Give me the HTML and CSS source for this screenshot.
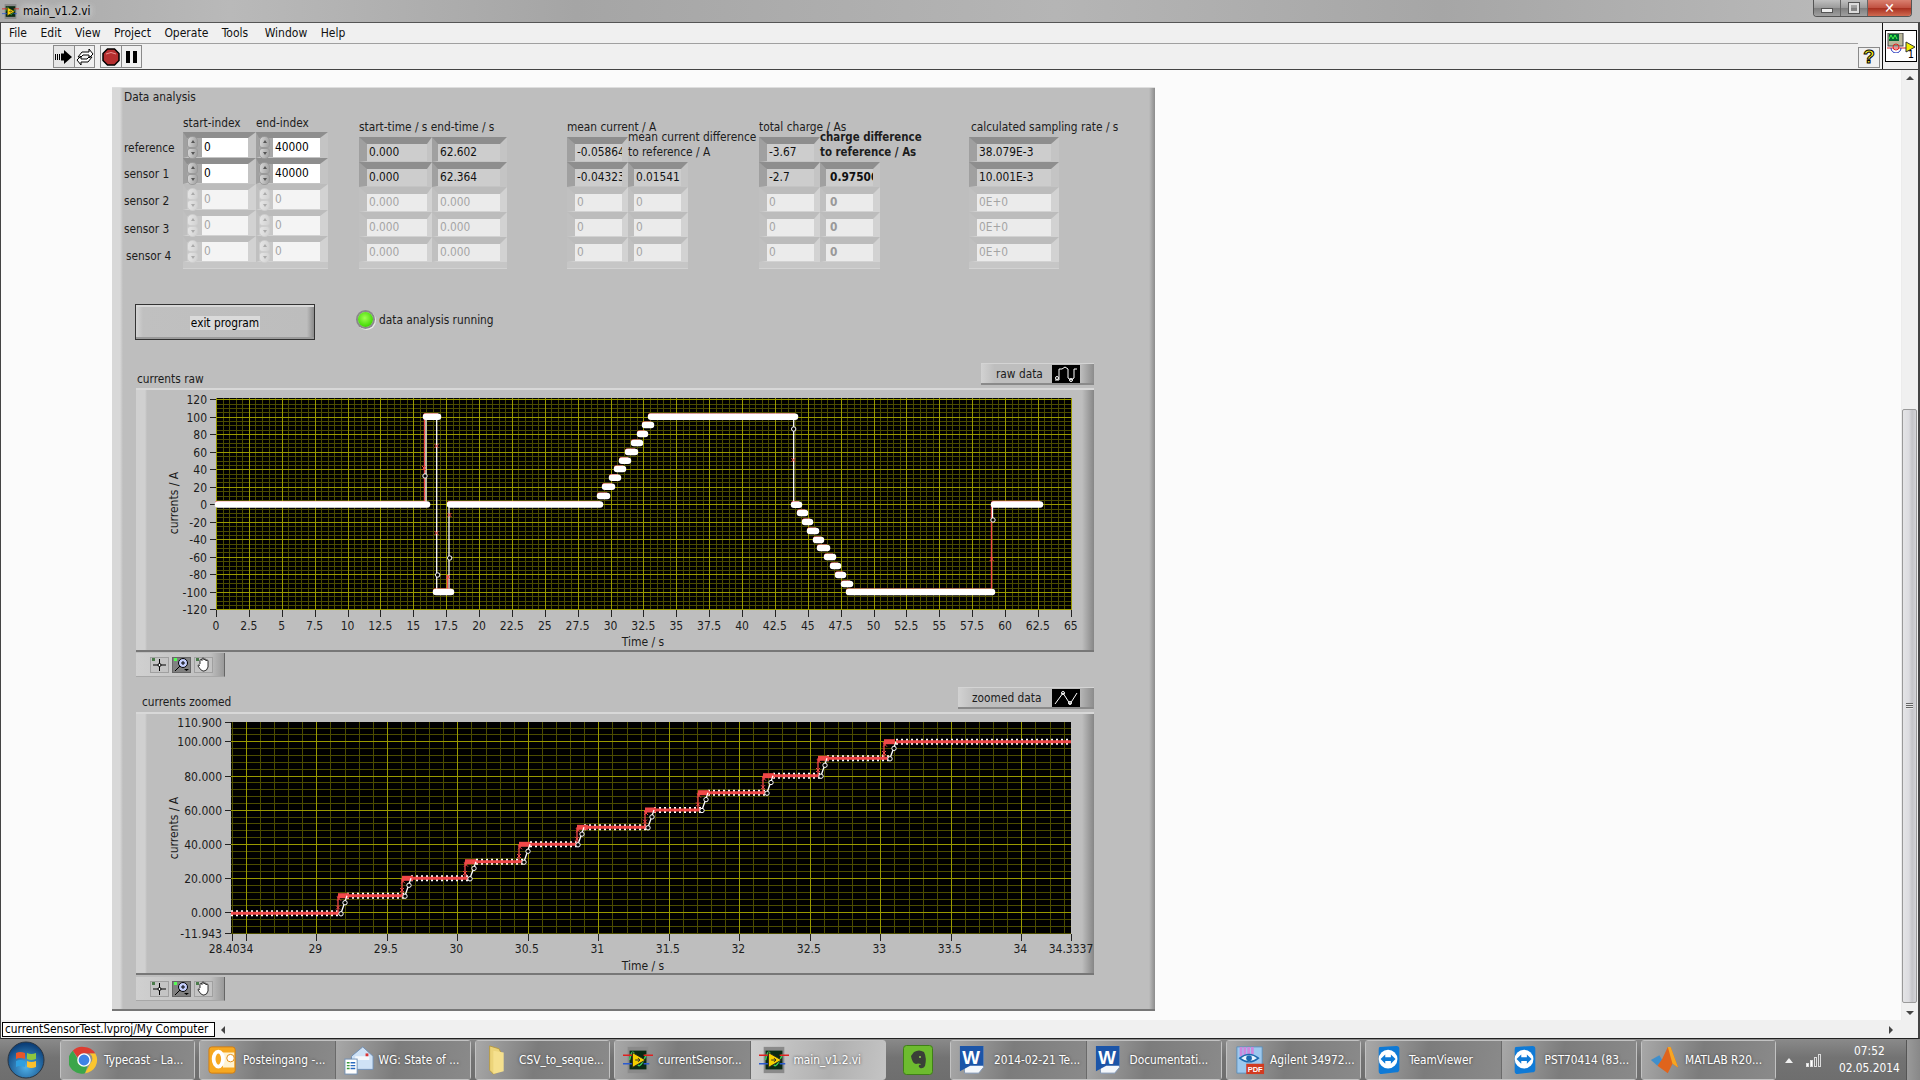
FILE: index.html
```html
<!DOCTYPE html>
<html lang="en">
<head>
    <title>main_v1.2.vi</title>
    <link rel="stylesheet" href="styles.css">
</head>
<body>
    <!-- Shared icons -->
    <svg class="icon-defs" aria-hidden="true">
        <symbol id="i-vi" viewBox="0 0 32 32">
            <rect x="5" y="2" width="22" height="28" fill="#8a8a8a"/>
            <rect x="7" y="6" width="18" height="20" fill="#0a2a12"/>
            <path d="M7 16c3-14 5-8 7 0s4 10 11-6" fill="none" stroke="#3fd05a" stroke-width="1.5"/>
            <path d="M0 11h10M22 11h10" stroke="#e02020" stroke-width="1.5"/>
            <path d="M0 20h10M22 20h6" stroke="#2a5ad0" stroke-width="1.5"/>
            <path d="M10 8l14 8-14 8z" fill="#f5d000" stroke="#222"/>
            <path d="M13 16h5M16 14l2 2-2 2" fill="none" stroke="#222"/>
        </symbol>
        <symbol id="i-word" viewBox="0 0 32 32">
            <path d="M4 2h22v22l-5 6H6z" fill="#f4f7fb" stroke="#7d93b2"/>
            <path d="M1 1h25v21H12L1 28z" fill="#1c55a8"/>
        </symbol>
        <symbol id="i-tv" viewBox="0 0 32 32">
            <path d="M6 2l18-1q3 0 3 3v22q0 3-3 3L8 31q-3 0-3-3V5q0-3 1-3z" fill="#0f7ad6"/>
            <circle cx="15" cy="15" r="10" fill="#fff"/>
            <path d="M7 15l5-5v3h6v-3l5 5-5 5v-3h-6v3z" fill="#0f7ad6"/>
        </symbol>
    </svg>

    <!-- Title bar -->
    <header class="titlebar">
        <svg class="title-icon"><use href="#i-vi"/></svg>
        <span class="title-text">main_v1.2.vi</span>
        <div class="win-buttons">
            <div class="win-btn"><span class="min-glyph"></span></div>
            <div class="win-btn"><span class="max-glyph"></span></div>
            <div class="win-btn win-close">&#10005;</div>
        </div>
    </header>

    <div class="window">
        <div class="bars">
            <div class="bars-left">
                <nav class="menubar">
                    <a href="#">File</a>
                    <a href="#">Edit</a>
                    <a href="#">View</a>
                    <a href="#">Project</a>
                    <a href="#">Operate</a>
                    <a href="#">Tools</a>
                    <a href="#">Window</a>
                    <a href="#">Help</a>
                </nav>
                <div class="toolbar">
                    <div class="tool-group">
                        <div class="tool tool-light">
                            <svg width="18" height="14" viewBox="0 0 18 14"><path d="M0 4h1v6H0zM2 4h1v6H2zM4 4h1v6H4zM6 3.500h3V0l8 7-8 7v-3.500H6z" fill="#000"/></svg>
                        </div>
                        <div class="tool">
                            <svg width="18" height="18" viewBox="0 0 18 18"><path d="M2 9l4-5h7V1l4 5-4 4V7H7L5 9zM16 9l-4 5H5v3l-4-5 4-4v3h6l2-2z" fill="#fff" stroke="#000"/></svg>
                        </div>
                    </div>
                    <div class="tool-group">
                        <div class="tool">
                            <svg width="18" height="18" viewBox="0 0 18 18"><path d="M5.500 1h7L17 5.500v7L12.500 17h-7L1 12.500v-7z" fill="#b52e2e" stroke="#000" stroke-width="1.500"/><path d="M4 6q5-3 10 0" fill="none" stroke="#e89090"/></svg>
                        </div>
                        <div class="tool">
                            <span class="pause-bar"></span><span class="pause-bar"></span>
                        </div>
                    </div>
                </div>
            </div>
            <div class="help-btn">?</div>
            <div class="conn-pane">
                <div class="conn-icon">
                    <svg width="29" height="20" viewBox="0 0 29 20">
                        <rect x="1" y="0" width="15" height="13" fill="#b9b79a" stroke="#444"/>
                        <rect x="2" y="1" width="10" height="7" fill="#063"/>
                        <path d="M2 6l2-4 2 4 2-4 2 4" fill="none" stroke="#4f4" />
                        <path d="M0 15h22" stroke="#d22"/>
                        <path d="M4 15a5 5 0 0 0 10 0" fill="none" stroke="#23b"/>
                        <circle cx="9" cy="14" r="3" fill="none" stroke="#d22"/>
                        <path d="M19 9l9 5-9 5z" fill="#ee0" stroke="#333"/>
                    </svg>
                    <span class="conn-num">1</span>
                </div>
            </div>
        </div>

        <div class="workspace">
            <main class="content">
                <section class="panel">
                    <div class="panel-title">Data analysis</div>

                    <!-- Indicator clusters -->
                    <div class="controls">
                        <div class="row-labels">
                            <span>reference</span>
                            <span>sensor 1</span>
                            <span>sensor 2</span>
                            <span>sensor 3</span>
                            <span class="indent">sensor 4</span>
                        </div>
                        <div class="column">
                            <div class="col-label">start-index</div>
                            <div class="array array-index">
                                <div class="well"><div class="spin"><i></i><i></i></div><div class="cell cell-input">0</div></div>
                                <div class="well"><div class="spin"><i></i><i></i></div><div class="cell cell-input">0</div></div>
                                <div class="well well-off"><div class="spin"><i></i><i></i></div><div class="cell">0</div></div>
                                <div class="well well-off"><div class="spin"><i></i><i></i></div><div class="cell">0</div></div>
                                <div class="well well-off"><div class="spin"><i></i><i></i></div><div class="cell">0</div></div>
                            </div>
                        </div>
                        <div class="column">
                            <div class="col-label">end-index</div>
                            <div class="array array-index array-end">
                                <div class="well"><div class="spin"><i></i><i></i></div><div class="cell cell-input">40000</div></div>
                                <div class="well"><div class="spin"><i></i><i></i></div><div class="cell cell-input">40000</div></div>
                                <div class="well well-off"><div class="spin"><i></i><i></i></div><div class="cell">0</div></div>
                                <div class="well well-off"><div class="spin"><i></i><i></i></div><div class="cell">0</div></div>
                                <div class="well well-off"><div class="spin"><i></i><i></i></div><div class="cell">0</div></div>
                            </div>
                        </div>

                        <div class="column gap-time">
                            <div class="col-label label-time">start-time / s end-time / s</div>
                            <div class="array w-time">
                                <div class="well"><div class="cell">0.000</div></div>
                                <div class="well"><div class="cell">0.000</div></div>
                                <div class="well well-off"><div class="cell">0.000</div></div>
                                <div class="well well-off"><div class="cell">0.000</div></div>
                                <div class="well well-off"><div class="cell">0.000</div></div>
                            </div>
                        </div>
                        <div class="column">
                            <div class="array w-time-end tight">
                                <div class="well"><div class="cell">62.602</div></div>
                                <div class="well"><div class="cell">62.364</div></div>
                                <div class="well well-off"><div class="cell">0.000</div></div>
                                <div class="well well-off"><div class="cell">0.000</div></div>
                                <div class="well well-off"><div class="cell">0.000</div></div>
                            </div>
                        </div>

                        <div class="column gap-mean">
                            <div class="col-label">mean current / A</div>
                            <div class="array w-61">
                                <div class="well"><div class="cell">-0.05864</div></div>
                                <div class="well"><div class="cell">-0.04323</div></div>
                                <div class="well well-off"><div class="cell">0</div></div>
                                <div class="well well-off"><div class="cell">0</div></div>
                                <div class="well well-off"><div class="cell">0</div></div>
                            </div>
                        </div>
                        <div class="column">
                            <div class="col-label label-two">mean current difference<br>to reference / A</div>
                            <div class="array w-60 tight">
                                <div class="well"><div class="cell">0.01541</div></div>
                                <div class="well well-off"><div class="cell">0</div></div>
                                <div class="well well-off"><div class="cell">0</div></div>
                                <div class="well well-off"><div class="cell">0</div></div>
                            </div>
                        </div>

                        <div class="column gap-charge">
                            <div class="col-label">total charge / As</div>
                            <div class="array w-61">
                                <div class="well"><div class="cell">-3.67</div></div>
                                <div class="well"><div class="cell">-2.7</div></div>
                                <div class="well well-off"><div class="cell">0</div></div>
                                <div class="well well-off"><div class="cell">0</div></div>
                                <div class="well well-off"><div class="cell">0</div></div>
                            </div>
                        </div>
                        <div class="column">
                            <div class="col-label label-two label-bold">charge difference<br>to reference / As</div>
                            <div class="array w-60 tight bold-cells">
                                <div class="well"><div class="cell">0.97500</div></div>
                                <div class="well well-off"><div class="cell">0</div></div>
                                <div class="well well-off"><div class="cell">0</div></div>
                                <div class="well well-off"><div class="cell">0</div></div>
                            </div>
                        </div>

                        <div class="column gap-rate">
                            <div class="col-label label-rate">calculated sampling rate / s</div>
                            <div class="array w-rate">
                                <div class="well"><div class="cell">38.079E-3</div></div>
                                <div class="well"><div class="cell">10.001E-3</div></div>
                                <div class="well well-off"><div class="cell">0E+0</div></div>
                                <div class="well well-off"><div class="cell">0E+0</div></div>
                                <div class="well well-off"><div class="cell">0E+0</div></div>
                            </div>
                        </div>
                    </div>

                    <!-- Exit button and status -->
                    <div class="run-row">
                        <button class="exit-btn"><span>exit program</span></button>
                        <span class="led"></span>
                        <span class="led-label">data analysis running</span>
                    </div>

                    <!-- Raw chart -->
                    <div class="chart-block">
                        <div class="chart-head">
                            <div class="chart-label">currents raw</div>
                            <div class="legend">
                                <span>raw data</span>
                                <svg class="legend-icon" width="28" height="18" viewBox="0 0 28 18"><path d="M3 15h4V4h3l3-2 3 2v9l3 2 3-2V4h3" fill="none" stroke="#fff"/><circle cx="5" cy="13" r="1.500" fill="none" stroke="#fff"/><circle cx="19" cy="15" r="1.500" fill="none" stroke="#fff"/></svg>
                            </div>
                        </div>
                        <div class="chart-frame">
                            <svg id="chart-raw" class="chart-svg" width="958" height="264" viewBox="136 388 958 264"></svg>
                        </div>
                        <div class="palette">
                            <div class="pal-btn"><svg width="17" height="15" viewBox="0 0 17 15"><rect x="1" y="1" width="3" height="3" fill="#4a7a4a"/><path d="M8.500 2v12M2 8h13" stroke="#000"/><circle cx="8.500" cy="8" r="1.500" fill="#fff" stroke="#000"/></svg></div>
                            <div class="pal-btn pal-active"><svg width="17" height="15" viewBox="0 0 17 15"><rect x="1" y="1" width="3" height="3" fill="#5f5"/><circle cx="10" cy="6" r="4.500" fill="#c6d0ff" stroke="#000"/><path d="M8 6h4M10 4v4M7 9l-5 5" stroke="#000"/><path d="M11 12h5l-2.500 2z" fill="#000"/></svg></div>
                            <div class="pal-btn"><svg width="17" height="15" viewBox="0 0 17 15"><rect x="1" y="1" width="3" height="3" fill="#4a7a4a"/><path d="M5 7V3.500a1 1 0 0 1 2 0V2a1 1 0 0 1 2 0v1a1 1 0 0 1 2 0v1a1 1 0 0 1 2 0v6q-1 4-4 4H8Q6 14 3 9q0-2 2-.5" fill="#fff" stroke="#000" stroke-width=".8"/></svg></div>
                        </div>
                    </div>

                    <!-- Zoomed chart -->
                    <div class="chart-block chart-block-low">
                        <div class="chart-head">
                            <div class="chart-label label-zoomed">currents zoomed</div>
                            <div class="legend legend-wide">
                                <span>zoomed data</span>
                                <svg class="legend-icon" width="28" height="18" viewBox="0 0 28 18"><path d="M3 15l8-11 7 11 7-11" fill="none" stroke="#fff"/><circle cx="11" cy="4" r="1.500" fill="none" stroke="#fff"/><circle cx="18" cy="14" r="1.500" fill="none" stroke="#fff"/></svg>
                            </div>
                        </div>
                        <div class="chart-frame chart-frame-low">
                            <svg id="chart-zoom" class="chart-svg" width="958" height="263" viewBox="136 712 958 263"></svg>
                        </div>
                        <div class="palette palette-low">
                            <div class="pal-btn"><svg width="17" height="15" viewBox="0 0 17 15"><rect x="1" y="1" width="3" height="3" fill="#4a7a4a"/><path d="M8.500 2v12M2 8h13" stroke="#000"/><circle cx="8.500" cy="8" r="1.500" fill="#fff" stroke="#000"/></svg></div>
                            <div class="pal-btn pal-active"><svg width="17" height="15" viewBox="0 0 17 15"><rect x="1" y="1" width="3" height="3" fill="#5f5"/><circle cx="10" cy="6" r="4.500" fill="#c6d0ff" stroke="#000"/><path d="M8 6h4M10 4v4M7 9l-5 5" stroke="#000"/><path d="M11 12h5l-2.500 2z" fill="#000"/></svg></div>
                            <div class="pal-btn"><svg width="17" height="15" viewBox="0 0 17 15"><rect x="1" y="1" width="3" height="3" fill="#4a7a4a"/><path d="M5 7V3.500a1 1 0 0 1 2 0V2a1 1 0 0 1 2 0v1a1 1 0 0 1 2 0v1a1 1 0 0 1 2 0v6q-1 4-4 4H8Q6 14 3 9q0-2 2-.5" fill="#fff" stroke="#000" stroke-width=".8"/></svg></div>
                        </div>
                    </div>
                </section>
            </main>

            <aside class="vscroll">
                <span class="arrow-up"></span>
                <div class="vthumb"><span class="grip"></span></div>
                <span class="arrow-down"></span>
            </aside>
        </div>

        <div class="hscroll">
            <div class="project-tag">currentSensorTest.lvproj/My Computer</div>
            <span class="arrow-left"></span>
            <span class="arrow-right"></span>
        </div>
    </div>

    <!-- Windows taskbar -->
    <footer class="taskbar">
        <div class="orb">
            <svg width="38" height="38" viewBox="0 0 38 38">
                <defs><radialGradient id="orb-fill" cx="50%" cy="70%" r="65%"><stop offset="0" stop-color="#4fb0e8"/><stop offset="1" stop-color="#0c3f78"/></radialGradient></defs>
                <circle cx="19" cy="19" r="18" fill="url(#orb-fill)" stroke="#2a3440"/>
                <path d="M9 12q4-2 9 0v6q-5-2-9 0z" fill="#e8562a"/>
                <path d="M20 12q4 2 9 0v6q-5 2-9 0z" fill="#8ec63f"/>
                <path d="M9 20q4-2 9 0v6q-5-2-9 0z" fill="#2f9fe0"/>
                <path d="M20 20q4 2 9 0v6q-5 2-9 0z" fill="#fbc02d"/>
            </svg>
        </div>
        <div class="task-group group-one">
            <div class="task">
                <svg class="task-icon" viewBox="0 0 32 32">
                    <path d="M16 2a14 14 0 0 1 12.100 7H16a7 7 0 0 0-6.500 4.500L4 6a14 14 0 0 1 12-4z" fill="#dd3d32"/>
                    <path d="M28.100 9A14 14 0 0 1 17 30l5.500-10a7 7 0 0 0-.5-11z" fill="#fbc62f"/>
                    <path d="M4 6l6 10a7 7 0 0 0 10 5l-3 9A14 14 0 0 1 4 6z" fill="#3ba64a"/>
                    <circle cx="16" cy="16" r="6.500" fill="#3f83e6" stroke="#fff" stroke-width="1.500"/>
                </svg>
                <span>Typecast - La...</span>
            </div>
        </div>
        <div class="task-group">
            <div class="task">
                <svg class="task-icon" viewBox="0 0 32 32">
                    <rect x="1" y="2" width="28" height="28" rx="3" fill="#f6a821" stroke="#d07c10"/>
                    <rect x="16" y="8" width="12" height="16" fill="#fff3d0"/>
                    <ellipse cx="11" cy="15" rx="5" ry="8" fill="none" stroke="#fff" stroke-width="4"/>
                    <circle cx="24" cy="14" r="4" fill="#fff" stroke="#e08a10"/>
                </svg>
                <span>Posteingang -...</span>
            </div>
            <div class="task">
                <svg class="task-icon" viewBox="0 0 32 32">
                    <path d="M8 12L20 2l11 10v14H8z" fill="#cfe2f6" stroke="#6f8fb5"/>
                    <path d="M12 12h15v4H12z" fill="#f4f8fc"/>
                    <rect x="23" y="9" width="3" height="3" fill="#d33"/>
                    <rect x="1" y="15" width="13" height="16" fill="#fff" stroke="#6f8fb5"/>
                    <path d="M3 19h3M3 22h3M3 25h3" stroke="#3a9a3a" stroke-width="1.500"/>
                    <path d="M7 19h5M7 22h5M7 25h5" stroke="#2a6ac0" stroke-width="1.500"/>
                </svg>
                <span>WG: State of ...</span>
            </div>
        </div>
        <div class="task-group group-one">
            <div class="task">
                <svg class="task-icon" viewBox="0 0 32 32">
                    <path d="M6 1l10 3 3 6v17l-9 4-4-4z" fill="#ecd47a" stroke="#b89a40"/>
                    <path d="M10 6l11 2v20l-11 3z" fill="#f5e08e"/>
                </svg>
                <span>CSV_to_seque...</span>
            </div>
        </div>
        <div class="task-group">
            <div class="task">
                <svg class="task-icon"><use href="#i-vi"/></svg>
                <span>currentSensor...</span>
            </div>
            <div class="task task-active">
                <svg class="task-icon"><use href="#i-vi"/></svg>
                <span>main_v1.2.vi</span>
            </div>
        </div>
        <div class="evernote">
            <svg width="30" height="30" viewBox="0 0 30 30">
                <rect x="0.500" y="0.500" width="29" height="29" rx="3" fill="#6dbb2f" stroke="#3f7f18"/>
                <path d="M8 11l3-4q5-3 10 0 3 6 1 14-2 3-5 2-2-1-1-3 2 0 2-1-3-1-5 0-4-1-5-8z" fill="#3a3f38"/>
                <circle cx="17" cy="12" r="1" fill="#8fd050"/>
            </svg>
        </div>
        <div class="task-group">
            <div class="task">
                <svg class="task-icon" viewBox="0 0 32 32"><use href="#i-word"/><text class="word-letter" x="13" y="20">W</text></svg>
                <span>2014-02-21 Te...</span>
            </div>
            <div class="task">
                <svg class="task-icon" viewBox="0 0 32 32"><use href="#i-word"/><text class="word-letter" x="13" y="20">W</text></svg>
                <span>Documentati...</span>
            </div>
        </div>
        <div class="task-group group-one">
            <div class="task">
                <svg class="task-icon" viewBox="0 0 32 32">
                    <path d="M2 2h27v28H2z" fill="#9cc8ee" stroke="#5d8db8"/>
                    <path d="M5 2h3v10H5zM9 2h3v9H9zM13 2h3v8h-3zM17 2h3v8h-3z" fill="#c8d"/>
                    <path d="M5 14q10-8 20 0-10 8-20 0z" fill="#e8f4fc" stroke="#1d69b0" stroke-width="1.500"/>
                    <circle cx="15" cy="14" r="3" fill="#1d69b0"/>
                    <rect class="pdf-tag" x="12" y="20" width="19" height="11"/>
                    <text class="pdf-text" x="21.500" y="28.500">PDF</text>
                </svg>
                <span>Agilent 34972...</span>
            </div>
        </div>
        <div class="task-group">
            <div class="task">
                <svg class="task-icon"><use href="#i-tv"/></svg>
                <span>TeamViewer</span>
            </div>
            <div class="task">
                <svg class="task-icon"><use href="#i-tv"/></svg>
                <span>PST70414 (83...</span>
            </div>
        </div>
        <div class="task-group group-one">
            <div class="task">
                <svg class="task-icon" viewBox="0 0 32 32">
                    <path d="M1 16l9-5 3 5-5 6z" fill="#3f8fcc"/>
                    <path d="M8 22l5-7 6-13 3 0 8 22-6-4-5 10z" fill="#e0641c"/>
                    <path d="M19 2l3 0 8 22-6-4z" fill="#f5a623"/>
                </svg>
                <span>MATLAB R20...</span>
            </div>
        </div>
        <div class="tray">
            <span class="tray-arrow"></span>
            <div class="signal"><i></i><i></i><i></i><i></i></div>
            <div class="clock"><span>07:52</span><span>02.05.2014</span></div>
        </div>
        <div class="show-desktop"></div>
    </footer>

    <script src="charts.js"></script>
</body>
</html>
```

FILE: styles.css
```css
/* Global Styles */
* {
    margin: 0;
    padding: 0;
    box-sizing: border-box;
}

body {
    width: 1920px;
    height: 1080px;
    overflow: hidden;
    display: flex;
    flex-direction: column;
    font-family: "DejaVu Sans Condensed", "Liberation Sans", sans-serif;
    font-stretch: condensed;
    font-size: 11.800px;
    color: #1c1c1c;
    background-color: #fbfbfb;
}

.icon-defs {
    position: absolute;
    width: 0;
    height: 0;
}

/* Title bar */
.titlebar {
    height: 22px;
    display: flex;
    align-items: center;
    padding-left: 2px;
    background: linear-gradient(90deg, #a9a9a9 0, #b9b9b9 12%, #a5a5a5 30%, #b5b5b5 55%, #a6a6a6 75%, #bdbdbd 100%);
}

.title-icon {
    width: 17px;
    height: 17px;
}

.title-text {
    margin-left: 4px;
    font-size: 11.800px;
    color: #000;
    text-shadow: 0 0 8px #f2f2f2, 0 0 8px #f2f2f2;
}

.win-buttons {
    margin-left: auto;
    margin-right: 8px;
    height: 17px;
    align-self: flex-start;
    display: flex;
    border: 1px solid #555;
    border-top: none;
    border-radius: 0 0 4px 4px;
    overflow: hidden;
}

.win-btn {
    width: 27px;
    display: flex;
    align-items: center;
    justify-content: center;
    background: linear-gradient(#c0c0c0, #9a9a9a 50%, #7f7f7f 52%, #a0a0a0);
    border-right: 1px solid #666;
}

.min-glyph {
    width: 12px;
    height: 5px;
    margin-top: 4px;
    background-color: #eee;
    border: 1px solid #555;
}

.max-glyph {
    width: 10px;
    height: 10px;
    background-color: transparent;
    border: 2px solid #dcdcdc;
    outline: 1px solid #555;
}

.win-close {
    width: 43px;
    border-right: none;
    color: #fff;
    font-size: 14px;
    font-weight: bold;
    background: linear-gradient(#d98070, #c05040 50%, #a83020 52%, #d06a50);
}

/* Window chrome */
.window {
    flex: 1;
    min-height: 0;
    display: flex;
    flex-direction: column;
    border-left: 1px solid #444;
    border-right: 2px solid #444;
    border-top: 1px solid #555;
    border-bottom: 1px solid #222;
}

.bars {
    height: 47px;
    display: flex;
    background-color: #f0f0f0;
    border-bottom: 1px solid #444;
}

.bars-left {
    flex: 1;
}

.menubar {
    height: 21px;
    display: flex;
    align-items: center;
    padding-left: 8px;
    gap: 13.500px;
    border-bottom: 1px solid #a0a0a0;
}

.menubar a {
    text-decoration: none;
    color: #111;
    font-size: 12px;
}

.menubar a:nth-child(7) {
    margin-left: 3px;
}

.toolbar {
    height: 25px;
    display: flex;
    align-items: center;
    padding-left: 52px;
    gap: 5px;
}

.tool-group {
    display: flex;
    border: 1px solid #8a8a8a;
}

.tool {
    width: 20px;
    height: 21px;
    display: flex;
    align-items: center;
    justify-content: center;
    gap: 3px;
    background-color: #f0f0f0;
}

.tool + .tool {
    border-left: 1px solid #8a8a8a;
}

.tool-light {
    background-color: #e6e6e6;
}

.pause-bar {
    width: 4px;
    height: 12px;
    background-color: #000;
}

.help-btn {
    align-self: flex-end;
    width: 22px;
    height: 21px;
    margin: 0 2px 1px 0;
    border: 1px solid #8a8a8a;
    text-align: center;
    line-height: 18px;
    font-family: "Liberation Sans", sans-serif;
    font-size: 19px;
    font-weight: bold;
    color: #f5ee20;
    -webkit-text-stroke: 1px #000;
}

.conn-pane {
    width: 36px;
    border-left: 1px solid #111;
    padding: 7px 0 0 2px;
}

.conn-icon {
    position: relative;
    width: 32px;
    height: 32px;
    background-color: #fff;
    border: 1px solid #000;
    padding: 2px 0 0 1px;
    line-height: 0;
}

.conn-num {
    position: absolute;
    right: 2px;
    bottom: 1px;
    font-size: 11px;
    line-height: 10px;
    color: #000;
}

.workspace {
    flex: 1;
    min-height: 0;
    display: flex;
}

.content {
    flex: 1;
    padding: 17px 0 0 111px;
    background-color: #fbfbfb;
}

/* Scrollbars */
.vscroll {
    position: relative;
    width: 17px;
    background-color: #f0f0f0;
    border-left: 1px solid #ececec;
}

.vthumb {
    position: absolute;
    left: 0;
    top: 339px;
    width: 15px;
    height: 594px;
    display: flex;
    align-items: center;
    justify-content: center;
    background: linear-gradient(90deg, #e4e4e6, #dcdce0 45%, #c4c4c8 70%, #d4d4d8);
    border: 1px solid #9a9a9a;
    border-radius: 2px;
}

.grip {
    width: 7px;
    height: 6px;
    background: repeating-linear-gradient(#666 0 1px, #e8e8e8 1px 2px);
}

.arrow-up, .arrow-down, .arrow-left, .arrow-right {
    position: absolute;
    width: 0;
    height: 0;
    border-style: solid;
    border-color: transparent;
}

.arrow-up {
    top: 6px;
    left: 4px;
    border-width: 0 4px 4px;
    border-bottom-color: #444;
}

.arrow-down {
    bottom: 5px;
    left: 4px;
    border-width: 4px 4px 0;
    border-top-color: #444;
}

.hscroll {
    position: relative;
    height: 18px;
    padding: 2px 0 0 1px;
    background-color: #f0f0f0;
}

.project-tag {
    width: 213px;
    height: 15px;
    line-height: 13px;
    padding-left: 2px;
    white-space: nowrap;
    overflow: hidden;
    color: #000;
    background-color: #fff;
    border: 1px solid #000;
}

.arrow-left {
    top: 6px;
    left: 220px;
    border-width: 4px 4px 4px 0;
    border-right-color: #444;
}

.arrow-right {
    top: 6px;
    right: 25px;
    border-width: 4px 0 4px 4px;
    border-left-color: #444;
}

/* Front panel */
.panel {
    width: 1043px;
    height: 924px;
    padding-left: 12px;
    background: linear-gradient(90deg, #d8d8d8 0, #d8d8d8 8px, #bebebe 11px, #bebebe calc(100% - 6px), #8c8c8c 100%);
    border-top: 1px solid #dedede;
    border-bottom: 2px solid #777;
}

.panel-title {
    height: 19px;
    line-height: 19px;
}

.controls {
    height: 162px;
    display: flex;
    align-items: flex-end;
}

.row-labels {
    flex: none;
    width: 59px;
    height: 137px;
    padding-top: 8px;
    display: flex;
    flex-direction: column;
}

.row-labels span {
    height: 16px;
    line-height: 16px;
    margin-bottom: 10px;
    white-space: nowrap;
}

.row-labels span:nth-child(2) {
    margin-bottom: 11px;
}

.row-labels span:nth-child(3) {
    margin-bottom: 12px;
}

.row-labels span:nth-child(4) {
    margin-bottom: 11px;
}

.row-labels .indent {
    padding-left: 2px;
}

.column {
    flex: none;
}

.col-label {
    width: 0;
    height: 16px;
    line-height: 16px;
    margin-bottom: 2px;
    white-space: nowrap;
    position: relative;
    z-index: 1;
}

.label-two {
    height: 30px;
    line-height: 15px;
}

.label-bold {
    font-weight: bold;
    font-size: 11.400px;
}

.label-rate {
    padding-left: 2px;
}

.gap-time {
    margin-left: 31px;
}

.gap-mean {
    margin-left: 60px;
}

.gap-charge {
    margin-left: 71px;
}

.gap-rate {
    margin-left: 89px;
}

/* Arrays of numerics */
.array {
    padding-bottom: 6px;
    background-color: #c6c6c6;
    border-bottom: 1px solid #d2d2d2;
}

.array-index {
    width: 73px;
    margin-top: -1px;
}

.array-end {
    width: 72px;
}

.w-time {
    width: 73px;
}

.w-time-end {
    width: 75px;
}

.w-61 {
    width: 61px;
}

.w-60 {
    width: 60px;
}

.w-rate {
    width: 90px;
}

.well {
    height: 25px;
    display: flex;
    background-color: #a8a8a8;
    border-style: solid;
    border-width: 7px 6px 1px 8px;
    border-color: #8e8e8e #c4c4c4 #c4c4c4 #a0a0a0;
}

.well-off {
    background-color: #c8c8c8;
    border-color: #bcbcbc #d2d2d2 #d2d2d2 #c0c0c0;
}

.w-time .well {
    border-right-width: 5px;
}

.tight .well {
    border-left-width: 6px;
    border-right-width: 7px;
}

.w-rate .well {
    border-right-width: 8px;
}

.cell {
    flex: 1;
    min-width: 0;
    padding-left: 2px;
    line-height: 17px;
    overflow: hidden;
    white-space: nowrap;
    color: #111;
    background-color: #cdcdcd;
}

.well-off .cell {
    color: #a4a4a4;
    background-color: #ebebeb;
}

.bold-cells .cell {
    font-weight: bold;
    padding-left: 4px;
}

.bold-cells .well-off .cell {
    color: #999;
}

.array-index .well {
    height: 26px;
    border-width: 6px 8px 1px 4px;
}

.array-end .well {
    border-left-width: 3px;
}

.array-index .cell {
    line-height: 19px;
    background-color: #f4f4f4;
}

.array-index .cell-input {
    color: #000;
    background-color: #fff;
}

.spin {
    flex: none;
    width: 11px;
    height: 23px;
    margin: -2px 4px 0 0;
    display: flex;
    flex-direction: column;
    align-items: stretch;
}

.array-end .spin {
    margin-right: 3px;
}

.spin i {
    flex: 1;
    display: flex;
    align-items: center;
    justify-content: center;
    background: linear-gradient(100deg, #d8d8d8, #a0a0a0);
    border-radius: 5px 5px 3px 3px;
    border: 1px solid #9a9a9a;
}

.spin i::after {
    content: "";
    width: 0;
    height: 0;
    border-style: solid;
    border-width: 0 2px 3px;
    border-color: transparent transparent #555;
}

.spin i + i {
    border-radius: 3px 3px 5px 5px;
}

.spin i + i::after {
    border-width: 3px 2px 0;
    border-color: #555 transparent transparent;
}

.well-off .spin i {
    background: linear-gradient(100deg, #e6e6e6, #d2d2d2);
    border-color: #cecece;
}

.well-off .spin i::after {
    border-bottom-color: #aaa;
}

.well-off .spin i + i::after {
    border-top-color: #aaa;
}

/* Exit button and LED */
.run-row {
    margin: 35px 0 0 11px;
    display: flex;
    align-items: center;
}

.exit-btn {
    flex: none;
    width: 180px;
    height: 36px;
    font: inherit;
    color: #000;
    background: linear-gradient(90deg, #d4d4d4 0, #c0c0c0 4%, #bdbdbd 96%, #8a8a8a 100%);
    border: 1px solid #333;
    box-shadow: inset 0 2px 0 #d8d8d8, inset 0 -2px 0 #9a9a9a;
    padding-top: 2px;
}

.exit-btn span {
    background-color: #dadada;
    padding: 0 1px;
}

.led {
    flex: none;
    width: 15px;
    height: 15px;
    margin-left: 43px;
    margin-bottom: 5px;
    border-radius: 50%;
    background: radial-gradient(circle at 45% 40%, #a0ff50, #4fe010 60%, #30a000);
    box-shadow: 0 0 0 2px #8a8a8a, 1px 1px 0 2px #e8e8e8;
}

.led-label {
    margin-left: 6px;
    margin-bottom: 4px;
}

/* Charts */
.chart-block {
    width: 958px;
    margin: 23px 0 0 12px;
}

.chart-block-low {
    margin-top: 10px;
}

.chart-head {
    height: 25px;
    display: flex;
    justify-content: space-between;
}

.chart-label {
    margin: 8px 0 0 1px;
    line-height: 16px;
}

.label-zoomed {
    margin: 7px 0 0 6px;
}

.legend {
    width: 113px;
    height: 22px;
    display: flex;
    align-items: center;
    padding-left: 15px;
    background: linear-gradient(90deg, #d2d2d2 0, #bebebe 12%, #bebebe 88%, #8c8c8c 100%);
    border-bottom: 2px solid #8a8a8a;
    border-top: 1px solid #d4d4d4;
}

.legend-wide {
    width: 136px;
    padding-left: 14px;
}

.legend-icon {
    margin-left: auto;
    margin-right: 14px;
    background-color: #000;
}

.chart-frame {
    height: 264px;
    line-height: 0;
    background: linear-gradient(90deg, #d0d0d0 0, #d0d0d0 9px, #bebebe 11px, #bebebe calc(100% - 12px), #868686 100%);
    border-top: 2px solid #d8d8d8;
    border-bottom: 2px solid #777;
    overflow: hidden;
}

.chart-frame-low {
    height: 263px;
}

.chart-svg {
    margin-top: -2px;
}

.palette {
    width: 89px;
    height: 24px;
    margin-top: 1px;
    display: flex;
    align-items: center;
    padding-left: 14px;
    gap: 3px;
    background: linear-gradient(90deg, #d0d0d0, #bebebe 85%, #9a9a9a);
    border-right: 1px solid #666;
    border-bottom: 1px solid #a8a8a8;
}

.palette-low {
    margin-top: 2px;
}

.pal-btn {
    width: 19px;
    height: 16px;
    display: flex;
    align-items: center;
    justify-content: center;
    background-color: #c4c4c4;
    border: 1px solid #a0a0a0;
}

.pal-active {
    background-color: #808080;
    border-color: #666;
}

/* Chart drawing, see charts.js */
.plot-bg {
    fill: #000;
}

.grid-minor {
    stroke: #4c4c00;
}

.grid-major {
    stroke: #999900;
}

.tick {
    stroke: #222;
}

.axis-text {
    font-size: 12px;
    fill: #1c1c1c;
}

.axis-end {
    text-anchor: end;
}

.axis-mid {
    text-anchor: middle;
}

.trace-fat {
    stroke: #fff;
    stroke-width: 6.500px;
    stroke-linecap: round;
    fill: none;
}

.trace-red-top {
    stroke: #f04848;
    stroke-width: 1.500px;
    fill: none;
}

.trace-thin {
    stroke: #fff;
    stroke-width: 1.300px;
    fill: none;
}

.trace-thin-red {
    stroke: #f04848;
    stroke-width: 1.300px;
    fill: none;
}

.mark-o {
    fill: #000;
    stroke: #fff;
    stroke-width: 1px;
}

.mark-x {
    stroke: #f04848;
    fill: none;
}

.level-white {
    stroke: #fff;
    stroke-width: 6px;
    stroke-dasharray: 2 3;
    fill: none;
}

.level-red {
    stroke: #f04848;
    stroke-width: 3px;
    fill: none;
}

.level-start {
    stroke: #f04848;
    stroke-width: 5px;
    fill: none;
}

/* Taskbar */
.taskbar {
    height: 41px;
    display: flex;
    align-items: stretch;
    gap: 4px;
    padding-top: 1px;
    color: #fff;
    background: linear-gradient(#8a8a8a, #737373 45%, #6e6e6e 100%);
}

.orb {
    flex: none;
    width: 56px;
    padding: 0 0 0 7px;
    display: flex;
    align-items: center;
}

.task-group {
    flex: none;
    width: 272px;
    display: flex;
    border: 1px solid #c2c2c2;
    border-radius: 3px;
    box-shadow: inset 0 0 0 1px #5c5c5c;
}

.group-one {
    width: 135px;
}

.task {
    flex: 1;
    min-width: 0;
    display: flex;
    align-items: center;
    padding-left: 8px;
    gap: 5px;
    white-space: nowrap;
    background: linear-gradient(100deg, #a8a8a8, #7c7c7c 45%, #8a8a8a);
}

.task span {
    text-shadow: 0 0 3px #333;
}

.task + .task {
    border-left: 1px solid #6a6a6a;
}

.task-active {
    background: linear-gradient(100deg, #cfcfcf, #b0b0b0 60%, #c4c4c4);
}

.task-icon {
    width: 30px;
    height: 30px;
    flex-shrink: 0;
}

.evernote {
    flex: none;
    width: 56px;
    display: flex;
    align-items: center;
    justify-content: center;
}

.word-letter {
    font-family: "Liberation Sans", sans-serif;
    font-weight: bold;
    font-size: 20px;
    text-anchor: middle;
    fill: #fff;
}

.pdf-tag {
    fill: #d23a20;
}

.pdf-text {
    font-family: "Liberation Sans", sans-serif;
    font-weight: bold;
    font-size: 8px;
    text-anchor: middle;
    fill: #fff;
}

.tray {
    flex: none;
    width: 122px;
    display: flex;
    align-items: center;
    padding-left: 5px;
}

.tray-arrow {
    width: 0;
    height: 0;
    border-style: solid;
    border-width: 0 4px 5px;
    border-color: transparent transparent #f0f0f0;
}

.signal {
    height: 14px;
    margin-left: 13px;
    display: flex;
    align-items: flex-end;
    gap: 1px;
}

.signal i {
    width: 3px;
    border: 1px solid #ddd;
}

.signal i:nth-child(1) {
    height: 4px;
    background-color: #fff;
}

.signal i:nth-child(2) {
    height: 7px;
    background-color: #fff;
}

.signal i:nth-child(3) {
    height: 10px;
}

.signal i:nth-child(4) {
    height: 13px;
}

.clock {
    margin-left: 18px;
    display: flex;
    flex-direction: column;
    align-items: center;
    gap: 4px;
    line-height: 13px;
}

.show-desktop {
    flex: none;
    width: 14px;
    margin-left: auto;
    background: linear-gradient(90deg, #9a9a9a, #888);
    border-left: 1px solid #555;
}
```

FILE: charts.js
```js
// draws the two waveform graphs, coordinates are page pixels (see the svg viewBox)
function hline(y, x1, x2, cls) {
    return `<line x1="${x1}" y1="${y}" x2="${x2}" y2="${y}" class="${cls}"/>`;
}

function vline(x, y1, y2, cls) {
    return `<line x1="${x}" y1="${y1}" x2="${x}" y2="${y2}" class="${cls}"/>`;
}

function label(x, y, text, align) {
    return `<text x="${x}" y="${y}" class="axis-text ${align}">${text}</text>`;
}

function snap(v) {
    return Math.round(v) + 0.5;
}

function drawGrid(plot) {
    let out = `<rect x="${plot.l}" y="${plot.t}" width="${plot.r - plot.l}" height="${plot.b - plot.t}" class="plot-bg"/>`;
    let major = '';

    // vertical lines
    for (let v = plot.xFrom; v <= plot.xTo + 0.001; v += plot.xStep) {
        const x = plot.xPos(v);
        for (let i = 1; i < plot.xMinor; i++) {
            const mx = x + (plot.xPos(plot.xStep) - plot.xPos(0)) * i / plot.xMinor;
            if (mx < plot.r) out += vline(snap(mx), plot.t, plot.b, 'grid-minor');
            const back = x - (plot.xPos(plot.xStep) - plot.xPos(0)) * i / plot.xMinor;
            if (v === plot.xFrom && back > plot.l) out += vline(snap(back), plot.t, plot.b, 'grid-minor');
        }
        major += vline(snap(x), plot.t, plot.b, 'grid-major');
        out += vline(snap(x), plot.b, plot.b + 7, 'tick');
    }

    // horizontal lines
    for (let v = plot.yFrom; v <= plot.yTo + 0.001; v += plot.yStep) {
        const y = plot.yPos(v);
        for (let i = 1; i < plot.yMinor; i++) {
            const my = y - (plot.yPos(0) - plot.yPos(plot.yStep)) * i / plot.yMinor;
            if (my > plot.t) out += hline(snap(my), plot.l, plot.r, 'grid-minor');
            const back = y + (plot.yPos(0) - plot.yPos(plot.yStep)) * i / plot.yMinor;
            if (v === plot.yFrom && back < plot.b) out += hline(snap(back), plot.l, plot.r, 'grid-minor');
        }
        major += hline(snap(y), plot.l, plot.r, 'grid-major');
        out += hline(snap(y), plot.l - 6, plot.l, 'tick');
    }

    return out + major;
}

function circle(x, y) {
    return `<circle cx="${x}" cy="${y}" r="2.200" class="mark-o"/>`;
}

function cross(x, y) {
    return `<path d="M${x - 2} ${y - 2}l4 4m0 -4l-4 4" class="mark-x"/>`;
}

function drawRaw() {
    const plot = {
        l: 216, t: 398, r: 1071, b: 610,
        xFrom: 0, xTo: 65, xStep: 2.5, xMinor: 5, xPos: v => 216 + 13.15 * v,
        yFrom: -120, yTo: 120, yStep: 20, yMinor: 4, yPos: v => 504.3 - 0.876 * v
    };
    let out = drawGrid(plot);

    for (let v = 0; v <= 65; v += 2.5) out += label(plot.xPos(v), 630, v, 'axis-mid');
    for (let v = -120; v <= 120; v += 20) out += label(207, plot.yPos(v) + 5, v, 'axis-end');

    // [from, to, y] of every flat stretch
    const flats = [
        [218, 427, 504.5], [426, 438, 416.7], [436, 451, 592], [450, 600, 504.5],
        [600, 607, 496], [605, 612, 486.7], [612, 618, 477.7], [617, 623, 469], [622, 628, 460.7],
        [628, 635, 452], [634, 640, 443], [640, 645, 434], [645, 651, 425], [651, 795, 416.7],
        [794, 799, 504.7], [800, 805, 513], [805, 810, 522], [810, 816, 531], [816, 821, 540],
        [820, 827, 548], [827, 833, 557], [833, 838, 566], [838, 843, 575], [844, 850, 584],
        [849, 992, 592], [994, 1040, 504.4]
    ];

    // thin jumps
    out += vline(424.5, 417, 504, 'trace-thin-red') + vline(426, 417, 504, 'trace-thin');
    out += vline(436.7, 417, 592, 'trace-thin');
    out += vline(449, 505, 592, 'trace-thin');
    out += vline(447.5, 575, 592, 'trace-thin-red');
    out += vline(793.7, 417, 504, 'trace-thin');
    out += vline(991.5, 504, 592, 'trace-thin-red') + vline(992.5, 504, 520, 'trace-thin');

    flats.forEach(f => {
        out += hline(f[2] - 2.8, f[0] - 2, f[1], 'trace-red-top');
        out += vline(f[0] - 2, f[2] - 3, f[2] + 1, 'trace-red-top');
    });
    flats.forEach(f => {
        out += hline(f[2], f[0], f[1], 'trace-fat');
    });

    [[425, 476], [437.7, 575], [449.7, 558], [793.7, 429], [993, 520]].forEach(p => {
        out += circle(p[0], p[1]);
    });
    [[424, 468], [436.5, 446], [436.5, 533], [449.5, 515], [448, 577], [793.3, 460], [991.7, 559]].forEach(p => {
        out += cross(p[0], p[1]);
    });

    out += label(643, 646, 'Time / s', 'axis-mid');
    out += `<text transform="translate(178 503) rotate(-90)" class="axis-text axis-mid">currents / A</text>`;
    document.getElementById('chart-raw').innerHTML = out;
}

function drawZoom() {
    const plot = {
        l: 231, t: 722, r: 1071, b: 934,
        xFrom: 28.5, xTo: 34, xStep: 0.5, xMinor: 5, xPos: v => 316.3 + 141 * (v - 29),
        yFrom: 0, yTo: 100, yStep: 20, yMinor: 5, yPos: v => 912.3 - 1.71 * v
    };
    let out = drawGrid(plot);

    ['29', '29.5', '30', '30.5', '31', '31.5', '32', '32.5', '33', '33.5', '34'].forEach(t => {
        out += label(plot.xPos(Number(t)) - 1, 953, t, 'axis-mid');
    });
    out += label(231, 953, '28.4034', 'axis-mid') + vline(232.5, 934, 941, 'tick');
    out += label(1071, 953, '34.3337', 'axis-mid') + vline(1071.5, 934, 941, 'tick');
    [0, 20, 40, 60, 80, 100].forEach(v => {
        out += label(222, plot.yPos(v) + 5, v.toFixed(3), 'axis-end');
    });
    out += label(222, 727, '110.900', 'axis-end') + hline(722.5, 225, 231, 'tick');
    out += label(222, 938, '-11.943', 'axis-end') + hline(933.5, 225, 231, 'tick');

    // y of each level, and where white ends / red jumps to the next level
    const levels = [913.3, 895.7, 878.3, 861.7, 844.3, 827.3, 810, 792.7, 775.7, 758.3, 741.7];
    const ends = [341, 405, 470, 524, 578, 648, 702, 767, 821, 890];
    const reds = [338, 402, 465, 519, 577, 645, 698, 763, 818, 884];

    levels.forEach((y, i) => {
        const from = i === 0 ? 231 : ends[i - 1] + 6;
        const to = i === levels.length - 1 ? 1071 : ends[i];
        out += hline(y, from, to, 'level-white') + hline(y, from, to, 'level-red');
    });
    ends.forEach((e, i) => {
        const y1 = levels[i];
        const y2 = levels[i + 1];
        out += vline(reds[i], y2, y1, 'trace-thin-red');
        out += hline(y2, reds[i], reds[i] + 11, 'level-start');
        out += cross(reds[i], (y1 + y2) / 2 + 3) + cross(reds[i] + 1, y2 + 3);
        out += `<line x1="${e}" y1="${y1}" x2="${e + 6}" y2="${y2}" class="trace-thin"/>`;
        out += circle(e, y1 + 0.5) + circle(e + 4, (y1 * 2 + y2 * 3) / 5);
    });

    out += label(643, 970, 'Time / s', 'axis-mid');
    out += `<text transform="translate(178 828) rotate(-90)" class="axis-text axis-mid">currents / A</text>`;
    document.getElementById('chart-zoom').innerHTML = out;
}

drawRaw();
drawZoom();
```
